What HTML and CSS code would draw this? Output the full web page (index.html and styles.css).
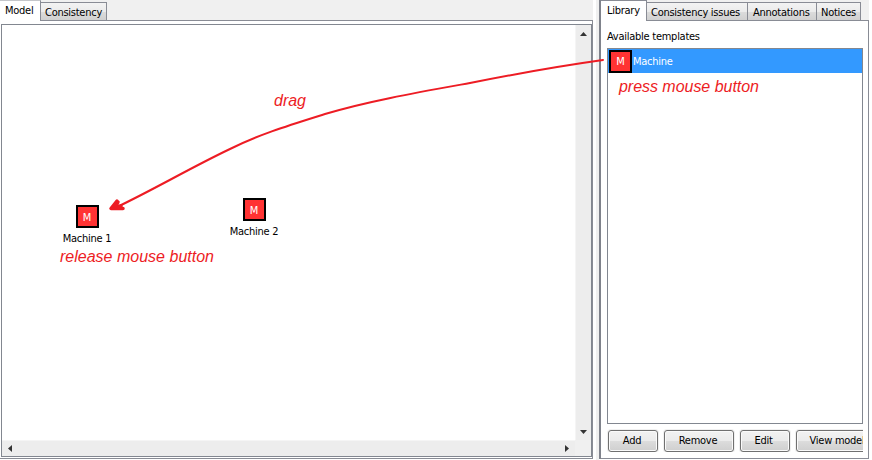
FILE: index.html
```html
<!DOCTYPE html>
<html lang="en">
<head>
<meta charset="utf-8">
<title>Model editor</title>
<link rel="stylesheet" href="styles.css">
</head>
<body>
<div class="app">
  <section class="model">
    <nav class="tabs">
      <div class="tab active t-model"><span>Model</span></div>
      <div class="tab t-consistency"><span>Consistency</span></div>
      <div class="fill"></div>
    </nav>
    <div class="model-body">
      <div class="viewport">
        <div class="canvas">
          <div class="node n1"><i class="machine">M</i><span>Machine 1</span></div>
          <div class="node n2"><i class="machine">M</i><span>Machine 2</span></div>
        </div>
        <div class="vbar">
          <svg width="7" height="4" viewBox="0 0 7 4"><path d="M0 4 3.5 0 7 4z"/></svg>
          <svg width="7" height="4" viewBox="0 0 7 4"><path d="M0 0h7L3.5 4z"/></svg>
        </div>
        <div class="hbar">
          <svg width="4" height="7" viewBox="0 0 4 7"><path d="M4 0v7L0 3.5z"/></svg>
          <svg width="4" height="7" viewBox="0 0 4 7"><path d="M0 0v7l4-3.5z"/></svg>
        </div>
        <div class="corner"></div>
      </div>
    </div>
  </section>
  <div class="splitter"></div>
  <section class="side">
    <nav class="tabs">
      <div class="tab active t-library"><span>Library</span></div>
      <div class="tab t-issues"><span>Consistency issues</span></div>
      <div class="tab t-annotations"><span>Annotations</span></div>
      <div class="tab t-notices"><span>Notices</span></div>
      <div class="fill"></div>
    </nav>
    <div class="side-body">
      <div class="heading"><span>Available templates</span></div>
      <div class="list">
        <div class="row"><i class="machine">M</i><span>Machine</span></div>
      </div>
      <div class="buttons">
        <div class="btn b-add">Add</div>
        <div class="btn b-remove">Remove</div>
        <div class="btn b-edit">Edit</div>
        <div class="btn b-view">View model</div>
      </div>
    </div>
  </section>
  <svg class="notes" width="872" height="460" viewBox="0 0 872 460">
    <path d="M603 60C560 66 515 74 470 83C420 92 368 101 325 114C290 125 260 134 230 149C190 168 155 189 115 208"/>
    <path class="head" d="M117 201 111 208.500 123 208.500M118 202 115 208 121 206"/>
    <text x="274" y="106" textLength="32">drag</text>
    <text x="619" y="92" textLength="140">press mouse button</text>
    <text x="60" y="262" textLength="154">release mouse button</text>
  </svg>
</div>
</body>
</html>
```

FILE: styles.css
```css
* { box-sizing: border-box; }
body {
  margin: 0;
  background: #fff;
  color: #000;
  font: 11px/14px "DejaVu Sans Condensed", "DejaVu Sans", sans-serif;
  font-stretch: condensed;
  letter-spacing: -0.26px;
}
.app { position: relative; display: flex; width: 872px; height: 460px; overflow: hidden; }
span { white-space: nowrap; }

.tabs { display: flex; height: 21px; background: #f0f0f0; align-items: flex-end; }
.tab {
  height: 19px;
  border: 1px solid #898c95;
  border-left-width: 0;
  background: linear-gradient(#f3f3f3, #ebebeb 50%, #dcdcdc 51%, #d0d0d0);
  padding: 3px 0 0 4px;
}
.tab.active {
  height: 21px;
  border-bottom: 0;
  background: #fff;
  padding-top: 3px;
}
.fill { flex: 1; height: 1px; background: #898c95; }

.model { width: 593px; display: flex; flex-direction: column; }
.tab.t-model { width: 41px; padding-left: 5px; border-top-color: #c4c6ca; }
.t-consistency { width: 66px; }
.model-body {
  height: 438px;
  padding: 3px 0 1px 1px;
  border: solid #898c95;
  border-width: 0 1px 1px 0;
}
.viewport {
  display: grid;
  grid-template: 415px 16px / 573px 16px;
  width: 591px;
  height: 433px;
  border: 1px solid #828790;
}
.canvas { position: relative; background: #fff; }
.node {
  position: absolute;
  width: 60px;
  display: flex;
  flex-direction: column;
  align-items: center;
  gap: 4px;
}
.n1 { left: 55px; top: 180px; }
.n2 { left: 222px; top: 173px; }
.machine {
  display: flex;
  align-items: center;
  justify-content: center;
  width: 23px;
  height: 23px;
  padding-top: 2px;
  border: 2px solid #000;
  background: #f33;
  color: #fff;
  font-style: normal;
}
.vbar, .hbar { display: flex; justify-content: space-between; align-items: center; background: #ededed; }
.vbar { flex-direction: column; padding: 7px 0 6px; border-left: 1px solid #f5f5f5; }
.hbar { padding: 0 6px; border-top: 1px solid #f5f5f5; }
.vbar svg, .hbar svg { fill: #333; }
.corner { background: #f0f0f0; }

.splitter { width: 6px; background: linear-gradient(90deg, #fff 3px, #f0f0f0 3px); }

.side {
  width: 270px;
  height: 459px;
  border-left: 2px solid #7f828b;
}
.t-library { width: 46px; padding-left: 6px; }
.t-issues { width: 101px; }
.t-annotations { width: 69px; padding-left: 5px; }
.t-notices { width: 44px; }
.side-body {
  height: 438px;
  border: solid #898c95;
  border-width: 0 1px 1px 0;
  padding: 9px 5px 0 6px;
}
.heading { height: 18px; }
.list { height: 376px; border: 1px solid #828790; }
.row {
  display: flex;
  align-items: center;
  gap: 1px;
  height: 24px;
  padding-left: 1px;
  background: #39f;
  color: #fff;
}
.row span { padding-top: 2px; }
.buttons { display: flex; gap: 6px; padding: 6px 0 0 1px; overflow: hidden; }
.btn {
  flex: none;
  height: 22px;
  border: 1px solid #707070;
  border-radius: 3px;
  background: linear-gradient(#f2f2f2, #ebebeb 48%, #dcdcdc 52%, #cfcfcf);
  box-shadow: inset 0 0 0 1px #fafafa, 0 0 0 1px #f0f0f0;
  text-align: center;
  line-height: 19px;
  white-space: nowrap;
}
.b-add { width: 50px; padding-right: 2px; }
.b-remove { width: 70px; padding-right: 2px; }
.b-edit { width: 50px; padding-right: 3px; }
.b-view { width: 82px; }

.notes { position: absolute; left: 0; top: 0; }
.notes path { fill: none; stroke: #ed1c24; stroke-width: 2; stroke-linecap: round; }
.notes .head { stroke-width: 3.500; stroke-linejoin: round; }
.notes text { fill: #ed1c24; font: italic 16px "Liberation Sans", Arial, sans-serif; letter-spacing: 0; }
```
